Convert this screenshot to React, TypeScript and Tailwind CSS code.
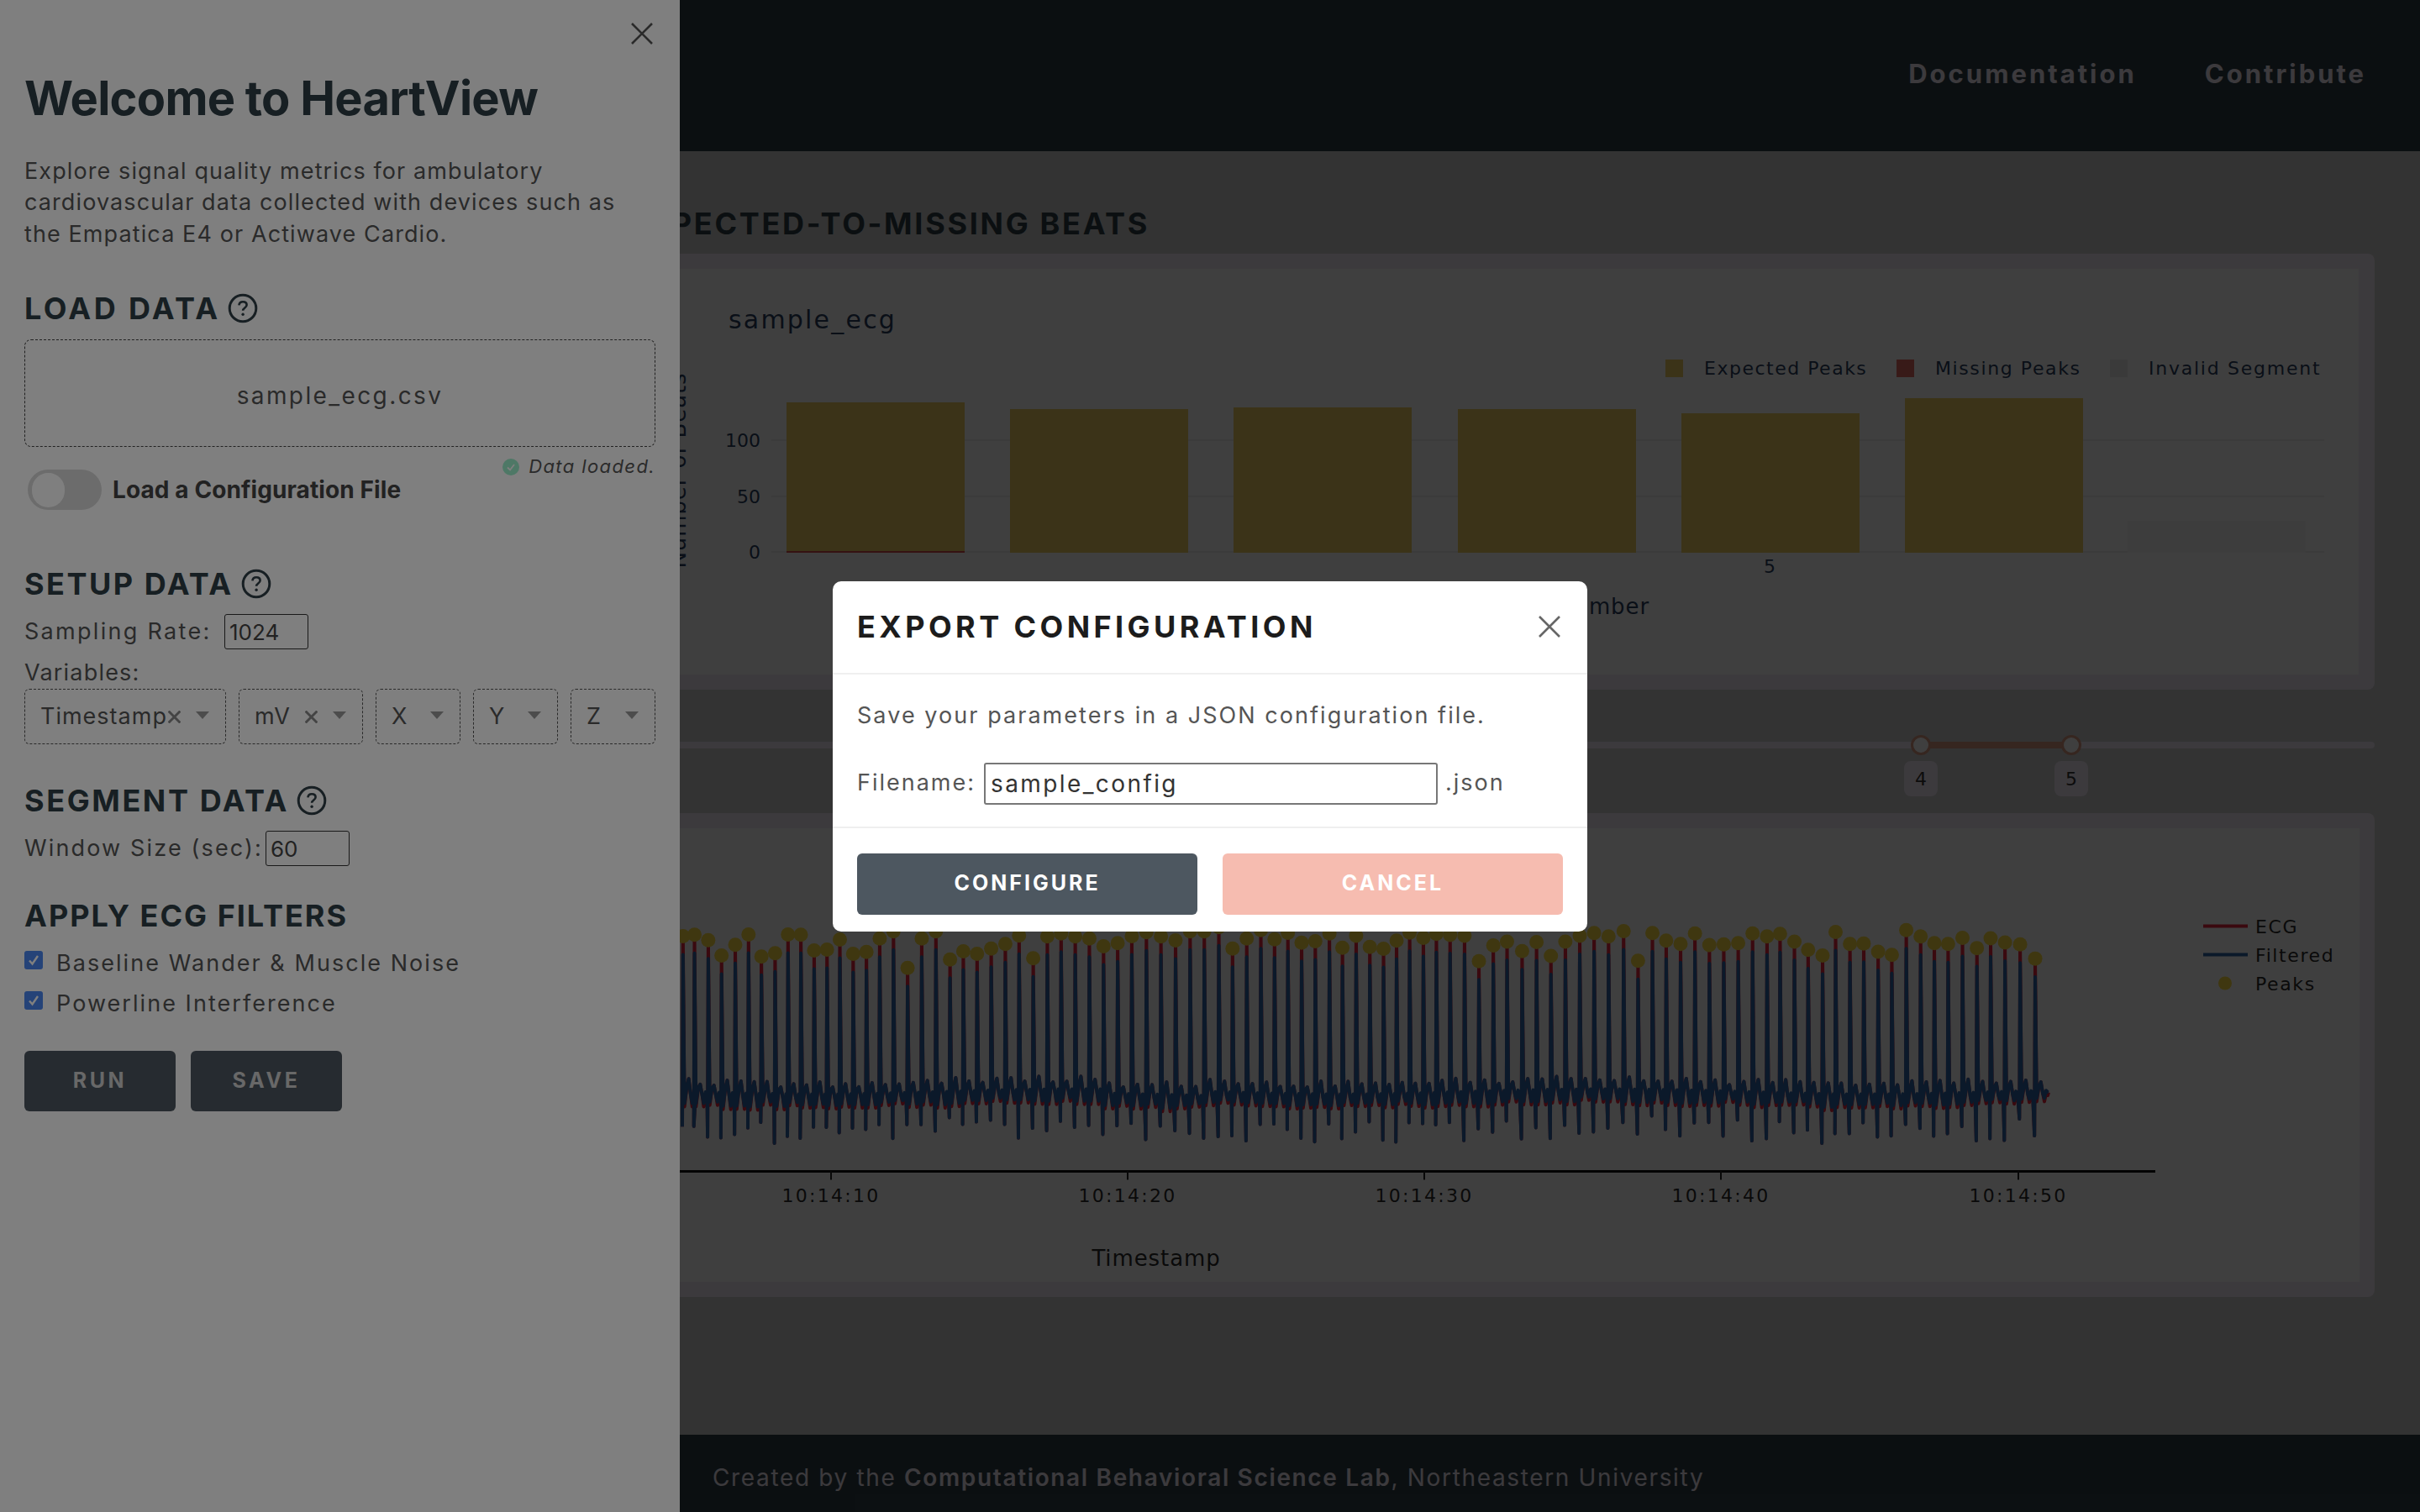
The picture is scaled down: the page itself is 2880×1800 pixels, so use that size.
import React from "react";

const UI = "font-['Inter','Noto_Sans',sans-serif]";
const CHART = "DejaVu Sans, sans-serif";

const z6: [number, number][] = [[25,102],[52,97],[84,116],[115,171],[147,133],[178,96],[208,175],[240,163],[270,96],[300,97],[331,153],[361,150],[391,114],[422,165],[453,158],[484,110],[516,85],[549,215],[582,110],[615,85],[648,185],[679,156],[711,165],[744,146],[777,130],[809,100],[842,181],[875,103],[907,92],[940,103],[973,110],[1006,138],[1039,127],[1072,102],[1106,88],[1140,103],[1174,117],[1208,85],[1241,85],[1275,70],[1307,146],[1340,110],[1373,80],[1405,113],[1436,90],[1468,125],[1500,120],[1533,92]];
const z7: [number, number][] = [[-3,622],[17,590],[37,620],[57,625],[76,603],[95,582],[115,596],[134,585],[154,588],[175,590],[196,658],[217,616],[237,606],[259,631],[280,607],[301,644],[322,606],[343,590],[364,583],[385,592],[407,578],[428,657],[449,583],[469,603],[490,612],[511,584],[532,615],[553,613],[574,610],[595,584],[616,592],[635,585],[656,606],[676,628],[697,643],[716,580],[737,612],[757,611],[778,633],[798,641],[819,575],[840,592],[860,610],[880,612],[901,596],[922,623],[942,597],[963,608],[985,613],[1007,651]];

const peaks: [number, number][] = [
  ...z6.map(([x, y]): [number, number] => [800 + x / 1.96, 1080 + y / 3]),
  ...z7.map(([x, y]): [number, number] => [1600 + x / 1.225, 850 + y / 2.24]),
];

function rnd(i: number) {
  const v = Math.sin(i * 12.9898 + 4.1) * 43758.5453;
  return v - Math.floor(v);
}

function linePoints(topOffset: number, dy: number) {
  const out: string[] = [];
  peaks.forEach(([x, y], i) => {
    const drift = Math.sin(i / 6) * 3 + (x > 1300 && x < 1420 ? 5 : 0);
    const base = 1301 + drift + dy;
    const down = 1330 + rnd(i) * 28 + drift;
    const hump = 1283 + rnd(i + 50) * 8 + drift;
    const dip = 1308 + rnd(i + 90) * 7 + drift + dy;
    const pts: [number, number][] = [
      [x - 0.8, down],
      [x, y + topOffset],
      [x + 1.8, dip],
      [x + 4.5, 1294 + drift],
      [x + 6.8, hump],
      [x + 9.2, 1303 + drift],
      [x + 11, dip],
      [x + 13, base - 2],
      [x + 15, base],
    ];
    pts.forEach(([a, b]) => out.push(`${a.toFixed(1)},${b.toFixed(1)}`));
  });
  const [lx] = peaks[peaks.length - 1];
  out.push(`${(lx + 16).toFixed(1)},1300`);
  return out.join(" ");
}

function X({ size, className, width = 2.6 }: { size: number; className?: string; width?: number }) {
  return (
    <svg width={size} height={size} viewBox="0 0 26 26" className={className}>
      <path d="M1 1L25 25M25 1L1 25" stroke="currentColor" strokeWidth={width} fill="none" />
    </svg>
  );
}

function Help() {
  return (
    <svg width="36" height="36" viewBox="0 0 36 36" className="shrink-0">
      <circle cx="18" cy="18" r="15.8" fill="none" stroke="#2f3e46" strokeWidth="3" />
      <path d="M13.4 14.3c.3-2.7 2.2-4.1 4.7-4.1 2.6 0 4.5 1.5 4.5 3.8 0 3.5-4.5 3.5-4.5 6.8" fill="none" stroke="#2f3e46" strokeWidth="2.6" />
      <circle cx="18.1" cy="25.3" r="1.7" fill="#2f3e46" />
    </svg>
  );
}

function SectionTitle({ children, help, className }: { children: React.ReactNode; help?: boolean; className?: string }) {
  return (
    <div className={`flex h-[40px] items-center gap-[9px] text-[36px] leading-[40px] font-bold text-[#2f3e46] ${className ?? ""}`}>
      <span>{children}</span>
      {help && <Help />}
    </div>
  );
}

function Select({ label, clear, className, clearClass }: { label: string; clear?: boolean; className: string; clearClass?: string }) {
  return (
    <div className={`relative flex h-[66px] items-center rounded-[6px] border border-dashed border-[#555] pl-[18px] text-[27px] tracking-[1px] text-[#555] ${className}`}>
      <span>{label}</span>
      {clear && <span className={`absolute top-[25px] text-[#888] ${clearClass}`}><X size={15} width={5} /></span>}
      <span className="absolute right-[19px] top-[26px] h-0 w-0 border-x-[8px] border-t-[9px] border-x-transparent border-t-[#999]" />
    </div>
  );
}

function Check({ label }: { label: string }) {
  return (
    <div className="flex h-[48px] items-center gap-[16px] text-[27px] tracking-[2.05px] text-[#555]">
      <span className="-mt-[8px] flex h-[22px] w-[22px] items-center justify-center rounded-[3px] bg-[#4a86f0]">
        <svg width="16" height="16" viewBox="0 0 16 16"><path d="M3 8.5L6.5 12.5L13 3" stroke="#fff" strokeWidth="2.4" fill="none" /></svg>
      </span>
      <span>{label}</span>
    </div>
  );
}

function Sidebar() {
  return (
    <aside className={`absolute left-0 top-0 h-full w-[809px] bg-white ${UI}`}>
      <div className="relative h-full px-[29px]">
        <span className="absolute left-[751px] top-[27px] text-[#555]"><X size={26} /></span>
        <h1 className="pt-[86px] text-[56px] leading-[62px] font-bold tracking-[-0.75px] text-[#2f3e46]">Welcome to HeartView</h1>
        <p className="mt-[37px] text-[27px] leading-[37.4px] tracking-[1.1px] text-[#555]">
          Explore signal quality metrics for ambulatory<br />cardiovascular data collected with devices such as<br />the Empatica E4 or Actiwave Cardio.
        </p>
        <SectionTitle help className="mt-[50px] tracking-[3.4px]">LOAD DATA</SectionTitle>
        <div className="mt-[17px] flex h-[128px] w-[751px] items-center justify-center rounded-[8px] border border-dashed border-[#444] pt-[6px] text-[28px] tracking-[2.4px] text-[#555]">sample_ecg.csv</div>
        <div className="relative h-[76px] w-[751px]">
          <div className="absolute right-0 top-[7px] flex items-center gap-[11px] text-[22px] italic tracking-[1.4px] text-[#555]">
            <span className="flex h-[20px] w-[20px] items-center justify-center rounded-full bg-[#9cf0cc]">
              <svg width="12" height="12" viewBox="0 0 12 12"><path d="M2 6.5L5 9.5L10 3" stroke="#fff" strokeWidth="1.8" fill="none" /></svg>
            </span>
            <span>Data loaded.</span>
          </div>
          <div className="absolute left-[4px] top-[27px] flex items-center gap-[13px]">
            <span className="relative h-[48px] w-[88px] rounded-full bg-[#d9d9d9]">
              <span className="absolute left-[5px] top-[4px] h-[41px] w-[39px] rounded-full bg-white" />
            </span>
            <span className="text-[28px] font-bold tracking-[0.1px] text-[#444]">Load a Configuration File</span>
          </div>
        </div>
        <SectionTitle help className="mt-[67px] tracking-[2.5px]">SETUP DATA</SectionTitle>
        <div className="mt-[16px] flex h-[42px] items-center text-[27px] tracking-[2.3px] text-[#555]">
          <span className="w-[238px]">Sampling Rate:</span>
          <input readOnly value="1024" className="h-[42px] w-[100px] rounded-[3px] border border-[#333] bg-transparent px-[5px] text-[26px] tracking-normal text-[#444] outline-none" />
        </div>
        <div className="mt-[8px] h-[39px] text-[27px] leading-[39px] tracking-[1.2px] text-[#555]">Variables:</div>
        <div className="flex w-[751px] justify-between">
          <Select label="Timestamp" clear className="w-[240px]" clearClass="left-[170px]" />
          <Select label="mV" clear className="w-[148px]" clearClass="left-[78px]" />
          <Select label="X" className="w-[101px]" />
          <Select label="Y" className="w-[101px]" />
          <Select label="Z" className="w-[101px]" />
        </div>
        <SectionTitle help className="mt-[47px] tracking-[2.6px]">SEGMENT DATA</SectionTitle>
        <div className="mt-[16px] flex h-[42px] items-center text-[27px] tracking-[2.15px] text-[#555]">
          <span className="w-[287px]">Window Size (sec):</span>
          <input readOnly value="60" className="h-[42px] w-[100px] rounded-[3px] border border-[#333] bg-transparent px-[5px] text-[26px] tracking-normal text-[#444] outline-none" />
        </div>
        <SectionTitle className="mt-[39px] tracking-[2px]">APPLY ECG FILTERS</SectionTitle>
        <div className="mt-[13px]"><Check label="Baseline Wander & Muscle Noise" /><Check label="Powerline Interference" /></div>
        <div className="mt-[32px] flex gap-[18px]">
          {["RUN", "SAVE"].map((t) => (
            <button key={t} className="h-[72px] w-[180px] rounded-[6px] bg-[#4d5760] text-[25px] font-bold tracking-[3.6px] text-[#d0d0d0]">{t}</button>
          ))}
        </div>
      </div>
    </aside>
  );
}

function BarChart() {
  const bars: [number, number, string][] = [[936, 479, "#ecce60"], [1202, 487, "#ecce60"], [1468, 485, "#ecce60"], [1735, 487, "#ecce60"], [2001, 492, "#ecce60"], [2267, 474, "#ecce60"], [2532, 620, "#f4f4f4"]];
  const legend: [number, number, string, string, number][] = [[1982, 2028, "#ecce60", "Expected Peaks", 1.5], [2257, 2303, "#e06a60", "Missing Peaks", 1.6], [2511, 2557, "#e8e8e8", "Invalid Segment", 1.75]];
  return (
    <svg viewBox="578 320 2229 483" className="block h-full w-full" fontFamily={CHART} fill="#2a3f5f">
      <text x="867" y="391" fontSize="30" letterSpacing="2.2">sample_ecg</text>
      {[524, 591, 657].map((y) => <line key={y} x1="918" x2="2766" y1={y} y2={y} stroke="#ececec" strokeWidth="2" />)}
      {bars.map(([x, y, c]) => <rect key={x} x={x} y={y} width="212" height={658 - y} fill={c} />)}
      <rect x="936" y="656" width="212" height="2" fill="#d4484a" />
      {[["100", 524], ["50", 591], ["0", 657]].map(([t, y]) => <text key={t} x="905" y={Number(y) + 8} fontSize="22" textAnchor="end">{t}</text>)}
      <text x="2106" y="682" fontSize="22" textAnchor="middle">5</text>
      <text x="1963" y="731" fontSize="26" textAnchor="end" letterSpacing="0.9">Segment Number</text>
      <text transform="translate(816 560) rotate(-90)" fontSize="26" textAnchor="middle" letterSpacing="0.9">Number of Beats</text>
      {legend.map(([sx, tx, c, t, ls]) => (
        <g key={t}><rect x={sx} y="428" width="21" height="21" fill={c} /><text x={tx} y="446" fontSize="22" letterSpacing={ls}>{t}</text></g>
      ))}
    </svg>
  );
}

function EcgChart() {
  const ticks: [number, string][] = [[989, "10:14:10"], [1342, "10:14:20"], [1695, "10:14:30"], [2048, "10:14:40"], [2402, "10:14:50"]];
  return (
    <svg viewBox="578 986 2230 539" className="block h-full w-full" fontFamily={CHART} fill="#2a2a2a">
      <polyline points={linePoints(0, 4)} fill="none" stroke="#e8243c" strokeWidth="4" strokeLinejoin="round" />
      <polyline points={linePoints(22, 0)} fill="none" stroke="#2f66a8" strokeWidth="4" strokeLinejoin="round" />
      {peaks.map(([x, y], i) => <circle key={i} cx={x} cy={y} r="8.5" fill="#ffdc40" />)}
      <line x1="600" x2="2565" y1="1394" y2="1394" stroke="#111" strokeWidth="3" />
      {ticks.map(([x, t]) => (
        <g key={t}><line x1={x} x2={x} y1="1394" y2="1404" stroke="#222" strokeWidth="2" /><text x={x} y="1430" fontSize="22" textAnchor="middle" letterSpacing="2.3">{t}</text></g>
      ))}
      <text x="1376" y="1506" fontSize="26" textAnchor="middle" letterSpacing="0.9">Timestamp</text>
      <line x1="2622" x2="2675" y1="1102" y2="1102" stroke="#e8243c" strokeWidth="4" />
      <line x1="2622" x2="2675" y1="1136" y2="1136" stroke="#2f66a8" strokeWidth="4" />
      <circle cx="2648" cy="1170" r="8" fill="#ffdc40" />
      <text x="2684" y="1110" fontSize="22" letterSpacing="1.6">ECG</text>
      <text x="2684" y="1144" fontSize="22" letterSpacing="1.6">Filtered</text>
      <text x="2684" y="1178" fontSize="22" letterSpacing="1.6">Peaks</text>
    </svg>
  );
}

function Handle({ label, left }: { label: string; left: string }) {
  return (
    <>
      <span className={`absolute top-[-8px] h-[24px] w-[24px] rounded-full border-[3px] border-[#d89a80] bg-white ${left}`} />
      <span className={`absolute top-[23px] ml-[-8px] flex h-[42px] w-[40px] items-center justify-center rounded-[8px] bg-[#f0e8f4] text-[22px] text-[#333] ${left}`} style={{ fontFamily: CHART }}>{label}</span>
    </>
  );
}

function Page() {
  return (
    <div className={`flex h-full w-full flex-col bg-[#cccccc] ${UI}`}>
      <header className="flex h-[180px] shrink-0 items-center justify-end gap-[81px] bg-[#2f3e46] pb-[3px] pr-[64px] text-[31px] font-bold tracking-[3px] text-[#f0e8f4]">
        <span>Documentation</span>
        <span>Contribute</span>
      </header>
      <main className="flex flex-1 flex-col pl-[560px] pr-[54px]">
        <div className="flex h-[122px] items-start whitespace-nowrap pt-[66px] text-[36px] leading-[40px] font-bold tracking-[2.7px] text-[#2f3e46]">
          <span className="ml-[186px]">EXPECTED-TO-MISSING BEATS</span>
        </div>
        <section className="h-[519px] rounded-[8px] bg-[#f0e8f4] pb-[18px] pl-[18px] pr-[19px] pt-[18px]">
          <div className="h-full bg-white"><BarChart /></div>
        </section>
        <div className="h-[147px] pt-[62px]">
          <div className="relative h-[8px] rounded-full bg-[#f0e8f4]">
            <span className="absolute left-[1726px] top-0 h-[8px] w-[179px] bg-[#d89a80]" />
            <Handle label="4" left="left-[1714px]" />
            <Handle label="5" left="left-[1893px]" />
          </div>
        </div>
        <section className="h-[576px] rounded-[8px] bg-[#f0e8f4] pb-[18px] pl-[18px] pr-[18px] pt-[18px]">
          <div className="h-full bg-white"><EcgChart /></div>
        </section>
      </main>
      <footer className="flex h-[92px] shrink-0 items-center bg-[#2f3e46] pl-[848px] pt-[10px] text-[28px] tracking-[1.65px] text-[#f0e8f4]">
        <span>Created by the <b className="font-semibold">Computational Behavioral Science Lab</b>, Northeastern University</span>
      </footer>
    </div>
  );
}

function Modal() {
  return (
    <div className="absolute inset-0 flex items-center justify-center bg-black/50">
      <div className={`w-[898px] rounded-[10px] bg-white ${UI}`}>
        <div className="flex h-[111px] items-center justify-between border-b-2 border-[#efefef] pl-[29px] pr-[32px]">
          <h2 className="text-[36px] font-bold tracking-[4.4px] text-[#1c1c1c]">EXPORT CONFIGURATION</h2>
          <span className="text-[#666]"><X size={26} /></span>
        </div>
        <div className="h-[183px] border-b-2 border-[#efefef] px-[29px] pt-[29px]">
          <p className="text-[27px] leading-[40px] tracking-[2.05px] text-[#555]">Save your parameters in a JSON configuration file.</p>
          <div className="mt-[36px] flex items-center text-[27px] tracking-[2px] text-[#555]">
            <span className="w-[151px]">Filename:</span>
            <input readOnly value="sample_config" className="h-[50px] w-[540px] rounded-[3px] border-2 border-[#777] bg-white px-[6px] text-[28px] tracking-[2.4px] text-[#333] outline-none" />
            <span className="ml-[9px]">.json</span>
          </div>
        </div>
        <div className="flex h-[123px] gap-[30px] px-[29px] pt-[30px]">
          <button className="h-[73px] flex-1 rounded-[6px] bg-[#4d5760] text-[25px] font-bold tracking-[3px] text-white">CONFIGURE</button>
          <button className="h-[73px] flex-1 rounded-[6px] bg-[#f6bcb0] text-[25px] font-bold tracking-[3px] text-white">CANCEL</button>
        </div>
      </div>
    </div>
  );
}

export default function App() {
  return (
    <div className="relative h-[1800px] w-[2880px] overflow-hidden">
      <Page />
      <div className="absolute inset-0 bg-black/50" />
      <Sidebar />
      <Modal />
    </div>
  );
}
